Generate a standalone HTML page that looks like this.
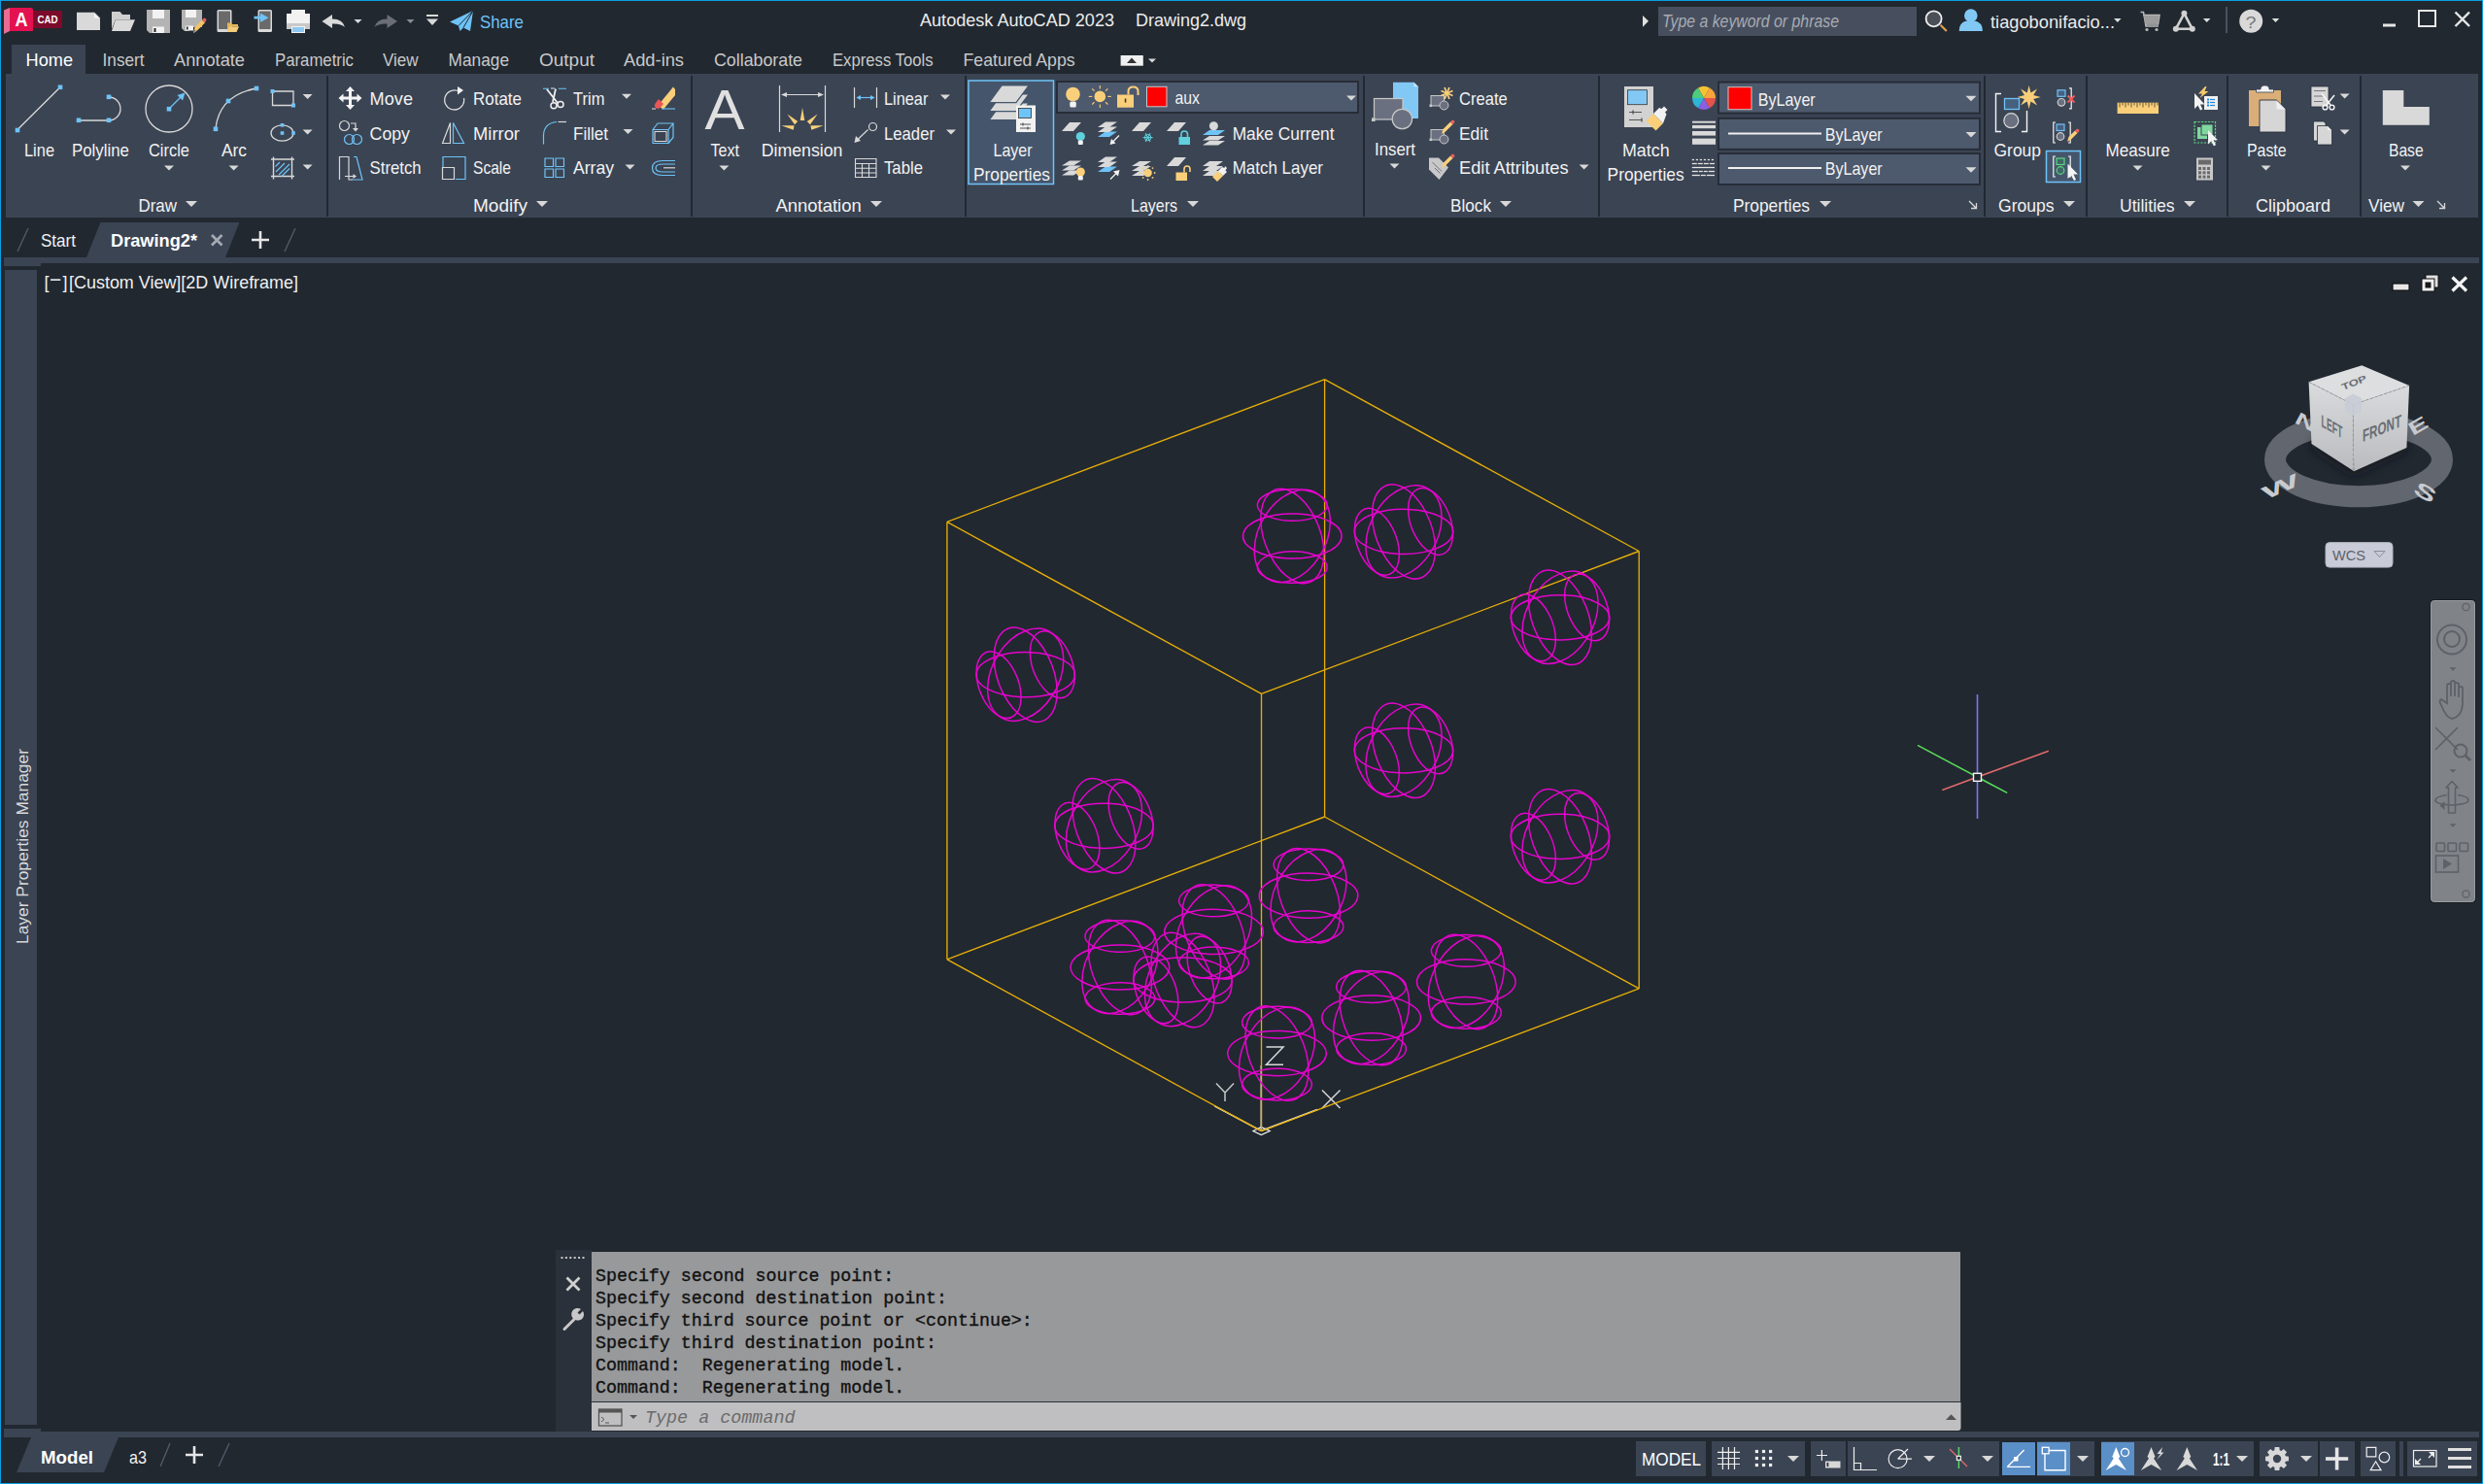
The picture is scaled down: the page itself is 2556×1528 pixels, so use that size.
<!DOCTYPE html>
<html><head><meta charset="utf-8"><title>AutoCAD 2023</title>
<style>html,body{margin:0;padding:0;background:#212830;overflow:hidden}svg{display:block}text{font-family:"Liberation Sans",sans-serif}</style></head>
<body><svg width="2556" height="1528" viewBox="0 0 2556 1528">
<rect x="0" y="0" width="2556" height="1528" fill="#212830" />
<rect x="12" y="46" width="76" height="30" fill="#3b4453" />
<rect x="6" y="76" width="2545" height="148" fill="#3b4453" />
<rect x="336" y="78" width="2" height="145" fill="#222832" />
<rect x="711" y="78" width="2" height="145" fill="#222832" />
<rect x="993" y="78" width="2" height="145" fill="#222832" />
<rect x="1403" y="78" width="2" height="145" fill="#222832" />
<rect x="1645" y="78" width="2" height="145" fill="#222832" />
<rect x="2042" y="78" width="2" height="145" fill="#222832" />
<rect x="2147" y="78" width="2" height="145" fill="#222832" />
<rect x="2292" y="78" width="2" height="145" fill="#222832" />
<rect x="2429" y="78" width="2" height="145" fill="#222832" />
<path d="M89 265L103.5 229H246.5L232 265Z" fill="#3b4453"/>
<rect x="4" y="265" width="2548" height="6" fill="#3b4453" />
<rect x="4" y="265" width="38" height="9" fill="#3b4453" />
<rect x="5" y="278" width="33" height="1189" fill="#3b4453" />
<rect x="4" y="1474" width="2548" height="6" fill="#3b4453" />
<rect x="4" y="1471" width="38" height="9" fill="#3b4453" />
<path d="M17 1516L32 1480H122L107 1516Z" fill="#3b4453"/>
<rect x="0" y="0" width="2556" height="1" fill="#0c9ee0" />
<rect x="0" y="0" width="1" height="1528" fill="#0c9ee0" />
<rect x="2555" y="0" width="1" height="1528" fill="#0c9ee0" />
<rect x="0" y="1527" width="2556" height="1" fill="#0c9ee0" />
<path d="M4 10.5L10 8V32L4 35Z" fill="#ea6c92"/>
<path d="M10 8H32Q34 8 34 10V32H10Z" fill="#e3114f"/>
<text x="15.5" y="27.2" font-size="19.5" fill="#ffffff" textLength="13" lengthAdjust="spacingAndGlyphs" font-weight="bold"  xml:space="preserve">A</text>
<rect x="34" y="11" width="30" height="18" fill="#7c0b2b" />
<text x="38.5" y="24.3" font-size="10.8" fill="#ffffff" textLength="21" lengthAdjust="spacingAndGlyphs" font-weight="bold"  xml:space="preserve">CAD</text>
<path d="M79 12.7H97L103 18.7V31H79Z" fill="#d9d9d9"/><path d="M97 12.7V18.7H103Z" fill="#f4f4f4"/><path d="M97 12.7L103 18.7" stroke="#9a9a9a" stroke-width="0.8"/>
<path d="M115 12H123.5L126 15H134V20H119L115 30Z" fill="#cfcfcf"/><path d="M119 20.3H139L134 32H115Z" fill="#d9d9d9"/>
<path d="M151 10H175V34H154L151 31Z" fill="#b4b4b4"/><rect x="157" y="10" width="12" height="9" fill="#f2f2f2"/><rect x="157" y="27.5" width="12" height="6.5" fill="#f2f2f2"/><rect x="158.5" y="29" width="2" height="4" fill="#222"/>
<path d="M187 10H208V28H199L194 32H190L187 29Z" fill="#b4b4b4"/><rect x="191" y="10" width="11" height="8" fill="#f2f2f2"/><rect x="191" y="26.5" width="8" height="5" fill="#f2f2f2"/><rect x="192" y="27.5" width="1.6" height="3" fill="#222"/>
<path d="M199 34L200.5 28L208 20.5L211 23.5L203.5 31Z" fill="#f2c464"/><path d="M208 20.5L209.5 19Q210.5 18 211.5 19L212 19.5Q213 20.5 212 21.5L211 23.5Z" fill="#e86060"/><path d="M199 34L200.5 30.5L202.5 32.5Z" fill="#888"/>
<rect x="223.5" y="10" width="15" height="23" rx="1.5" fill="#d9d9d9"/><rect x="225" y="11.5" width="12" height="18.5" fill="#6a6a6a"/>
<path d="M234 23.5H238L239 25H245V27H236.5L234 33Z" fill="#e7b55a"/><path d="M236 27.3H246L243.5 33H233.5Z" fill="#f4cd7a"/>
<rect x="265.5" y="10" width="14.5" height="23" rx="1.5" fill="#d9d9d9"/><rect x="267" y="11.5" width="11.5" height="18.5" fill="#6a6a6a"/>
<path d="M261.5 16.8H268V13.5L276.5 18.2L268 23V19.6H261.5Z" fill="#6ec3f7"/>
<rect x="300" y="10" width="14" height="5" fill="#f2f2f2"/><rect x="295" y="14" width="24" height="10" fill="#f2f2f2"/><rect x="295" y="24" width="24" height="6" fill="#c8c8c8"/><rect x="300" y="27" width="14" height="7" fill="#f2f2f2"/><rect x="301" y="28" width="12" height="5" fill="#8ec8f2"/>
<path d="M331.5 22L342 15V19.5Q353 19.5 355 28Q351 24 342 24.5V29Z" fill="#d9d9d9"/>
<path d="M364.5 20.0h8l-4.0 4z" fill="#d9d9d9"/>
<path d="M409 22L398.5 15V19.5Q387.5 19.5 385.5 28Q389.5 24 398.5 24.5V29Z" fill="#6b6e75"/>
<path d="M418.5 20.0h8l-4.0 4z" fill="#8a8c90"/>
<rect x="439" y="15" width="12" height="2" fill="#d9d9d9"/><path d="M439 19.5H451L445 26Z" fill="#d9d9d9"/>
<path d="M463 22.5L487 11L484 32L477 28.5L473.5 32L472 26.5Z" fill="#6ec3f7"/><path d="M472 26.5L487 11L477 28.5" fill="none" stroke="#212830" stroke-width="1"/>
<path d="M1691 16V27.7L1697 21.8Z" fill="#e0e0e0"/>
<circle cx="1990.6" cy="19.3" r="8" fill="#4a4f58" stroke="#f0f0f0" stroke-width="1.8"/><path d="M1997.5 25.8L2003.8 32" stroke="#e0a050" stroke-width="2.2"/>
<circle cx="2028.8" cy="16" r="6.8" fill="#82c8f5"/><path d="M2016.7 32Q2016.7 21 2028.8 21Q2040.9 21 2040.9 32Z" fill="#82c8f5"/>
<path d="M2176.05 19.0h7.5l-3.75 4z" fill="#e0e0e0"/>
<path d="M2203.5 12.5H2206.5L2209 27H2222M2206 15.5H2223L2221.5 25H2208" fill="none" stroke="#b8b8b8" stroke-width="1.5"/><path d="M2207 16H2222.5L2221 24.5H2208.5Z" fill="#9c9c9c"/><circle cx="2210" cy="30.5" r="1.6" fill="#b8b8b8"/><circle cx="2220" cy="30.5" r="1.6" fill="#b8b8b8"/>
<path d="M2248.4 13.8L2239.8 29.8H2256.8Z" fill="none" stroke="#d0d0d0" stroke-width="2.6" stroke-linejoin="round"/><circle cx="2248.4" cy="13.8" r="3" fill="#d0d0d0"/><circle cx="2239.8" cy="29.8" r="3" fill="#d0d0d0"/><circle cx="2256.8" cy="29.8" r="3" fill="#d0d0d0"/>
<path d="M2267.95 19.0h7.5l-3.75 4z" fill="#e0e0e0"/>
<rect x="2291" y="7" width="2" height="27" fill="#4a5160" />
<circle cx="2317.2" cy="21.7" r="12" fill="#d9d9d9"/>
<text x="2311.5" y="28.5" font-size="17" fill="#7a7a7a" textLength="11" lengthAdjust="spacingAndGlyphs"  xml:space="preserve">?</text>
<path d="M2338.75 19.0h7.5l-3.75 4z" fill="#e0e0e0"/>
<rect x="2453" y="24.5" width="13" height="3" fill="#e6e6e6" />
<rect x="2490" y="11" width="17" height="16" fill="none" stroke="#e6e6e6" stroke-width="2"/>
<path d="M2527.5 12.5L2542 27M2542 12.5L2527.5 27" stroke="#e6e6e6" stroke-width="2.4"/>
<text x="947" y="26.6" font-size="18.5" fill="#ececec" textLength="200" lengthAdjust="spacingAndGlyphs"  xml:space="preserve">Autodesk AutoCAD 2023</text>
<text x="1169" y="26.6" font-size="18.5" fill="#ececec" textLength="114" lengthAdjust="spacingAndGlyphs"  xml:space="preserve">Drawing2.dwg</text>
<text x="494" y="29" font-size="18.5" fill="#6ec3f7" textLength="45" lengthAdjust="spacingAndGlyphs"  xml:space="preserve">Share</text>
<rect x="1707" y="7" width="266" height="30" fill="#474f5f" />
<text x="1711" y="27.7" font-size="17.5" fill="#a8abb2" textLength="182" lengthAdjust="spacingAndGlyphs" font-style="italic"  xml:space="preserve">Type a keyword or phrase</text>
<text x="2049" y="29" font-size="18.5" fill="#ececec" textLength="128" lengthAdjust="spacingAndGlyphs"  xml:space="preserve">tiagobonifacio...</text>
<text x="26.6" y="68" font-size="19" fill="#ffffff" textLength="48.4" lengthAdjust="spacingAndGlyphs"  xml:space="preserve">Home</text>
<text x="105.6" y="68" font-size="19" fill="#c9c9c9" textLength="43.0" lengthAdjust="spacingAndGlyphs"  xml:space="preserve">Insert</text>
<text x="179" y="68" font-size="19" fill="#c9c9c9" textLength="73" lengthAdjust="spacingAndGlyphs"  xml:space="preserve">Annotate</text>
<text x="283" y="68" font-size="19" fill="#c9c9c9" textLength="81" lengthAdjust="spacingAndGlyphs"  xml:space="preserve">Parametric</text>
<text x="394" y="68" font-size="19" fill="#c9c9c9" textLength="36.60000000000002" lengthAdjust="spacingAndGlyphs"  xml:space="preserve">View</text>
<text x="461.6" y="68" font-size="19" fill="#c9c9c9" textLength="62.39999999999998" lengthAdjust="spacingAndGlyphs"  xml:space="preserve">Manage</text>
<text x="555" y="68" font-size="19" fill="#c9c9c9" textLength="57" lengthAdjust="spacingAndGlyphs"  xml:space="preserve">Output</text>
<text x="642" y="68" font-size="19" fill="#c9c9c9" textLength="62" lengthAdjust="spacingAndGlyphs"  xml:space="preserve">Add-ins</text>
<text x="735" y="68" font-size="19" fill="#c9c9c9" textLength="91" lengthAdjust="spacingAndGlyphs"  xml:space="preserve">Collaborate</text>
<text x="857" y="68" font-size="19" fill="#c9c9c9" textLength="103.5" lengthAdjust="spacingAndGlyphs"  xml:space="preserve">Express Tools</text>
<text x="991.5" y="68" font-size="19" fill="#c9c9c9" textLength="115.09999999999991" lengthAdjust="spacingAndGlyphs"  xml:space="preserve">Featured Apps</text>
<text x="142.4" y="218" font-size="19" fill="#f2f2f2" textLength="39.599999999999994" lengthAdjust="spacingAndGlyphs"  xml:space="preserve">Draw</text>
<path d="M191.0 207.0h12l-6.0 6z" fill="#d8d8d8"/>
<text x="487" y="218" font-size="19" fill="#f2f2f2" textLength="56" lengthAdjust="spacingAndGlyphs"  xml:space="preserve">Modify</text>
<path d="M552.0 207.0h12l-6.0 6z" fill="#d8d8d8"/>
<text x="798.4" y="218" font-size="19" fill="#f2f2f2" textLength="88.30000000000007" lengthAdjust="spacingAndGlyphs"  xml:space="preserve">Annotation</text>
<path d="M896.0 207.0h12l-6.0 6z" fill="#d8d8d8"/>
<text x="1164" y="218" font-size="19" fill="#f2f2f2" textLength="48" lengthAdjust="spacingAndGlyphs"  xml:space="preserve">Layers</text>
<path d="M1222.0 207.0h12l-6.0 6z" fill="#d8d8d8"/>
<text x="1493" y="218" font-size="19" fill="#f2f2f2" textLength="42" lengthAdjust="spacingAndGlyphs"  xml:space="preserve">Block</text>
<path d="M1544.0 207.0h12l-6.0 6z" fill="#d8d8d8"/>
<text x="1784" y="218" font-size="19" fill="#f2f2f2" textLength="79" lengthAdjust="spacingAndGlyphs"  xml:space="preserve">Properties</text>
<path d="M1873.0 207.0h12l-6.0 6z" fill="#d8d8d8"/>
<text x="2057" y="218" font-size="19" fill="#f2f2f2" textLength="57.5" lengthAdjust="spacingAndGlyphs"  xml:space="preserve">Groups</text>
<path d="M2124.0 207.0h12l-6.0 6z" fill="#d8d8d8"/>
<text x="2182" y="218" font-size="19" fill="#f2f2f2" textLength="56.59999999999991" lengthAdjust="spacingAndGlyphs"  xml:space="preserve">Utilities</text>
<path d="M2248.0 207.0h12l-6.0 6z" fill="#d8d8d8"/>
<text x="2322" y="218" font-size="19" fill="#f2f2f2" textLength="77" lengthAdjust="spacingAndGlyphs"  xml:space="preserve">Clipboard</text>
<text x="2438" y="218" font-size="19" fill="#f2f2f2" textLength="37" lengthAdjust="spacingAndGlyphs"  xml:space="preserve">View</text>
<path d="M2483.5 207.0h12l-6.0 6z" fill="#d8d8d8"/>
<rect x="997" y="83" width="87.5" height="106.5" fill="#45566c" stroke="#6ec3f7" stroke-width="1.5"/>
<text x="25" y="161" font-size="19" fill="#f2f2f2" textLength="31" lengthAdjust="spacingAndGlyphs"  xml:space="preserve">Line</text>
<text x="74" y="161" font-size="19" fill="#f2f2f2" textLength="59" lengthAdjust="spacingAndGlyphs"  xml:space="preserve">Polyline</text>
<text x="153" y="161" font-size="19" fill="#f2f2f2" textLength="42" lengthAdjust="spacingAndGlyphs"  xml:space="preserve">Circle</text>
<text x="228" y="161" font-size="19" fill="#f2f2f2" textLength="26" lengthAdjust="spacingAndGlyphs"  xml:space="preserve">Arc</text>
<text x="731.6" y="161" font-size="19" fill="#f2f2f2" textLength="29.399999999999977" lengthAdjust="spacingAndGlyphs"  xml:space="preserve">Text</text>
<text x="783.7" y="161" font-size="19" fill="#f2f2f2" textLength="83.79999999999995" lengthAdjust="spacingAndGlyphs"  xml:space="preserve">Dimension</text>
<text x="1022.5" y="161" font-size="19" fill="#f2f2f2" textLength="40.09999999999991" lengthAdjust="spacingAndGlyphs"  xml:space="preserve">Layer</text>
<text x="1415" y="159.5" font-size="19" fill="#f2f2f2" textLength="42" lengthAdjust="spacingAndGlyphs"  xml:space="preserve">Insert</text>
<text x="1670" y="161" font-size="19" fill="#f2f2f2" textLength="48.59999999999991" lengthAdjust="spacingAndGlyphs"  xml:space="preserve">Match</text>
<text x="2052.5" y="161" font-size="19" fill="#f2f2f2" textLength="48.5" lengthAdjust="spacingAndGlyphs"  xml:space="preserve">Group</text>
<text x="2167.5" y="161" font-size="19" fill="#f2f2f2" textLength="66.30000000000018" lengthAdjust="spacingAndGlyphs"  xml:space="preserve">Measure</text>
<text x="2313" y="161" font-size="19" fill="#f2f2f2" textLength="40.59999999999991" lengthAdjust="spacingAndGlyphs"  xml:space="preserve">Paste</text>
<text x="2459" y="161" font-size="19" fill="#f2f2f2" textLength="35.59999999999991" lengthAdjust="spacingAndGlyphs"  xml:space="preserve">Base</text>
<text x="1002" y="186" font-size="19" fill="#f2f2f2" textLength="79" lengthAdjust="spacingAndGlyphs"  xml:space="preserve">Properties</text>
<text x="1654.6" y="186" font-size="19" fill="#f2f2f2" textLength="79" lengthAdjust="spacingAndGlyphs"  xml:space="preserve">Properties</text>
<path d="M169.0 170.5h10l-5.0 5z" fill="#d8d8d8"/>
<path d="M235.6 170.5h10l-5.0 5z" fill="#d8d8d8"/>
<path d="M740.4 170.5h10l-5.0 5z" fill="#d8d8d8"/>
<path d="M2195.5 170.5h10l-5.0 5z" fill="#d8d8d8"/>
<path d="M2327.5 170.5h10l-5.0 5z" fill="#d8d8d8"/>
<path d="M2471.0 170.5h10l-5.0 5z" fill="#d8d8d8"/>
<path d="M1430.5 168.5h10l-5.0 5z" fill="#d8d8d8"/>
<text x="380.6" y="108" font-size="19" fill="#f2f2f2" textLength="44.39999999999998" lengthAdjust="spacingAndGlyphs"  xml:space="preserve">Move</text>
<text x="380.6" y="144" font-size="19" fill="#f2f2f2" textLength="41.39999999999998" lengthAdjust="spacingAndGlyphs"  xml:space="preserve">Copy</text>
<text x="380.6" y="179" font-size="19" fill="#f2f2f2" textLength="53.099999999999966" lengthAdjust="spacingAndGlyphs"  xml:space="preserve">Stretch</text>
<text x="487" y="108" font-size="19" fill="#f2f2f2" textLength="50" lengthAdjust="spacingAndGlyphs"  xml:space="preserve">Rotate</text>
<text x="487" y="144" font-size="19" fill="#f2f2f2" textLength="48" lengthAdjust="spacingAndGlyphs"  xml:space="preserve">Mirror</text>
<text x="487" y="179" font-size="19" fill="#f2f2f2" textLength="39" lengthAdjust="spacingAndGlyphs"  xml:space="preserve">Scale</text>
<text x="590" y="108" font-size="19" fill="#f2f2f2" textLength="32.39999999999998" lengthAdjust="spacingAndGlyphs"  xml:space="preserve">Trim</text>
<text x="590" y="144" font-size="19" fill="#f2f2f2" textLength="36" lengthAdjust="spacingAndGlyphs"  xml:space="preserve">Fillet</text>
<text x="590" y="179" font-size="19" fill="#f2f2f2" textLength="42" lengthAdjust="spacingAndGlyphs"  xml:space="preserve">Array</text>
<text x="910" y="108" font-size="19" fill="#f2f2f2" textLength="45.39999999999998" lengthAdjust="spacingAndGlyphs"  xml:space="preserve">Linear</text>
<text x="910" y="144" font-size="19" fill="#f2f2f2" textLength="52" lengthAdjust="spacingAndGlyphs"  xml:space="preserve">Leader</text>
<text x="910" y="179" font-size="19" fill="#f2f2f2" textLength="40" lengthAdjust="spacingAndGlyphs"  xml:space="preserve">Table</text>
<text x="1268.7" y="144" font-size="19" fill="#f2f2f2" textLength="104.79999999999995" lengthAdjust="spacingAndGlyphs"  xml:space="preserve">Make Current</text>
<text x="1268.7" y="179" font-size="19" fill="#f2f2f2" textLength="93.29999999999995" lengthAdjust="spacingAndGlyphs"  xml:space="preserve">Match Layer</text>
<text x="1502" y="108" font-size="19" fill="#f2f2f2" textLength="49.700000000000045" lengthAdjust="spacingAndGlyphs"  xml:space="preserve">Create</text>
<text x="1502" y="144" font-size="19" fill="#f2f2f2" textLength="30" lengthAdjust="spacingAndGlyphs"  xml:space="preserve">Edit</text>
<text x="1502" y="179" font-size="19" fill="#f2f2f2" textLength="112.59999999999991" lengthAdjust="spacingAndGlyphs"  xml:space="preserve">Edit Attributes</text>
<path d="M640.0 96.8h10l-5.0 5z" fill="#d8d8d8"/>
<path d="M641.5 133.0h10l-5.0 5z" fill="#d8d8d8"/>
<path d="M643.5 169.5h10l-5.0 5z" fill="#d8d8d8"/>
<path d="M968.0 97.5h10l-5.0 5z" fill="#d8d8d8"/>
<path d="M974.0 133.5h10l-5.0 5z" fill="#d8d8d8"/>
<path d="M1625.6 169.5h10l-5.0 5z" fill="#d8d8d8"/>
<path d="M311.6 97.1h10l-5.0 5z" fill="#d8d8d8"/>
<path d="M311.6 133.5h10l-5.0 5z" fill="#d8d8d8"/>
<path d="M311.6 169.5h10l-5.0 5z" fill="#d8d8d8"/>
<path d="M2408.6 96.5h10l-5.0 5z" fill="#d8d8d8"/>
<path d="M2408.6 133.5h10l-5.0 5z" fill="#d8d8d8"/>
<rect x="1088" y="84" width="310" height="32" fill="#4d596c" stroke="#272d38" stroke-width="2"/>
<text x="1209.5" y="107" font-size="19" fill="#f2f2f2" textLength="25.5" lengthAdjust="spacingAndGlyphs"  xml:space="preserve">aux</text>
<path d="M1386.0 98.5h10l-5.0 5z" fill="#d8d8d8"/>
<rect x="1769" y="84.6" width="269" height="32" fill="#4d596c" stroke="#272d38" stroke-width="2"/>
<path d="M2023.5 98.85h11l-5.5 5.5z" fill="#d8d8d8"/>
<rect x="1769" y="121.8" width="269" height="32" fill="#4d596c" stroke="#272d38" stroke-width="2"/>
<path d="M2023.5 136.05h11l-5.5 5.5z" fill="#d8d8d8"/>
<rect x="1769" y="158" width="269" height="32" fill="#4d596c" stroke="#272d38" stroke-width="2"/>
<path d="M2023.5 172.25h11l-5.5 5.5z" fill="#d8d8d8"/>
<rect x="1779" y="89.7" width="24" height="23" fill="#ff0000" stroke="#c8c8c8" stroke-width="1"/>
<text x="1809.7" y="109" font-size="19" fill="#f2f2f2" textLength="59" lengthAdjust="spacingAndGlyphs"  xml:space="preserve">ByLayer</text>
<text x="1878.7" y="145" font-size="19" fill="#f2f2f2" textLength="59" lengthAdjust="spacingAndGlyphs"  xml:space="preserve">ByLayer</text>
<text x="1878.7" y="180" font-size="19" fill="#f2f2f2" textLength="59" lengthAdjust="spacingAndGlyphs"  xml:space="preserve">ByLayer</text>
<rect x="1779" y="136.5" width="96" height="2" fill="#f0f0f0" />
<rect x="1779" y="172" width="96" height="2" fill="#f0f0f0" />
<path d="M18 133.5L62 89.8" fill="none" stroke="#d9d9d9" stroke-width="1.3" />
<rect x="15.7" y="131.7" width="4.6" height="4.6" fill="#6ec3f7" />
<rect x="59.7" y="87.5" width="4.6" height="4.6" fill="#6ec3f7" />
<path d="M81 124H112M112 100A12 12 0 0 1 112 124" fill="none" stroke="#d9d9d9" stroke-width="1.3" />
<rect x="78.7" y="121.5" width="4.6" height="4.6" fill="#6ec3f7" />
<rect x="109.7" y="121.5" width="4.6" height="4.6" fill="#6ec3f7" />
<rect x="109.7" y="97.5" width="4.6" height="4.6" fill="#6ec3f7" />
<circle cx="174" cy="112" r="24" fill="none" stroke="#d9d9d9" stroke-width="1.3"/>
<path d="M175 111L186 100" fill="none" stroke="#6ec3f7" stroke-width="1.3" />
<path d="M190.5 95.5L182.5 98L188 103.5Z" fill="#6ec3f7"/>
<rect x="171.7" y="109.9" width="4.6" height="4.6" fill="#6ec3f7" />
<path d="M222 132Q226 98 264 91" fill="none" stroke="#d9d9d9" stroke-width="1.3" />
<rect x="219.7" y="130.5" width="4.6" height="4.6" fill="#6ec3f7" />
<rect x="232.7" y="101.7" width="4.6" height="4.6" fill="#6ec3f7" />
<rect x="261.7" y="88.7" width="4.6" height="4.6" fill="#6ec3f7" />
<path d="M280.5 94H302V108.5H280.5Z" fill="none" stroke="#d9d9d9" stroke-width="1.3" />
<rect x="278.5" y="92.0" width="4" height="4" fill="#6ec3f7" />
<rect x="300.0" y="106.5" width="4" height="4" fill="#6ec3f7" />
<ellipse cx="290.5" cy="137" rx="11.5" ry="8.2" fill="none" stroke="#d9d9d9" stroke-width="1.3"/>
<rect x="288.7" y="135.2" width="3.6" height="3.6" fill="#6ec3f7" />
<rect x="288.7" y="127.0" width="3.6" height="3.6" fill="#6ec3f7" />
<rect x="300.2" y="135.2" width="3.6" height="3.6" fill="#6ec3f7" />
<path d="M279 164H303M279 181.5H303M281.5 161.5V184.5M300.5 161.5V184.5" fill="none" stroke="#d9d9d9" stroke-width="1.4" />
<path d="M284 177L293 168M287 180L298 169M290 181.5L298 173.5M283.5 171.5L288 167" fill="none" stroke="#6ec3f7" stroke-width="1.2" />
<path d="M360.5 89L365 94H362V99.5H367.5V96.5L372.5 101L367.5 105.5V102.5H362V108H365L360.5 113L356 108H359V102.5H353.5V105.5L348.5 101L353.5 96.5V99.5H359V94H356Z" fill="#f4f4f4"/>
<path d="M473 94.5A10 10 0 1 0 477.5 101" fill="none" stroke="#d9d9d9" stroke-width="1.3"/>
<path d="M471 89V97.5L477 93Z" fill="#f4f4f4"/>
<path d="M559 91.2H565M575 91.2H583" fill="none" stroke="#6ec3f7" stroke-width="1.1" />
<path d="M567 91H571" fill="none" stroke="#d9d9d9" stroke-width="1.1" />
<path d="M563 92L574 106M572 91.5L569 105" fill="none" stroke="#f0f0f0" stroke-width="1.8" />
<circle cx="570" cy="108.8" r="3" fill="none" stroke="#f0f0f0" stroke-width="1.5"/><circle cx="577" cy="107.5" r="3" fill="none" stroke="#f0f0f0" stroke-width="1.5"/>
<path d="M677 109L693 89.5L695 92V98L683 112.5Z" fill="#f9cf7a"/>
<path d="M674.5 106.5Q673 109 675 111Q677.5 113 680 110.5L683 107L678 102Z" fill="#e85656"/>
<path d="M671 112H675" fill="none" stroke="#d9d9d9" stroke-width="1.1" />
<path d="M681 112H695" fill="none" stroke="#6ec3f7" stroke-width="1.1" />
<circle cx="354.5" cy="129.5" r="5" fill="none" stroke="#d9d9d9" stroke-width="1.2"/>
<path d="M361 127H366V133" fill="none" stroke="#d9d9d9" stroke-width="1.2" />
<path d="M363 132H369L366 135.5Z" fill="#d9d9d9"/>
<circle cx="359.5" cy="143.5" r="5" fill="none" stroke="#6ec3f7" stroke-width="1.2"/><circle cx="367.5" cy="143.5" r="5" fill="none" stroke="#6ec3f7" stroke-width="1.2"/>
<path d="M455.5 147.5L463.5 126.5V147.5Z" fill="none" stroke="#d9d9d9" stroke-width="1.2" />
<path d="M466.5 147.5V126.5L477.5 147.5Z" fill="none" stroke="#6ec3f7" stroke-width="1.2" />
<path d="M559.5 148.5V139Q560 127 573 125.5" fill="none" stroke="#6ec3f7" stroke-width="1.2" />
<path d="M574.5 125.5H583" fill="none" stroke="#d9d9d9" stroke-width="1.2" />
<path d="M672 133.5H688V147.5H672ZM672 133.5L677 127H693L688 133.5M693 127V141.5L688 147.5" fill="none" stroke="#6ec3f7" stroke-width="1.2" />
<path d="M674 135.5H686V145.5H674Z" fill="none" stroke="#d9d9d9" stroke-width="1.1" />
<path d="M349.5 185V161.5H359V185H363" fill="none" stroke="#d9d9d9" stroke-width="1.2" />
<path d="M364 161.5H367L373 185H363" fill="none" stroke="#6ec3f7" stroke-width="1.2" />
<path d="M355 181.5H364" fill="none" stroke="#d9d9d9" stroke-width="1.1" />
<path d="M363.5 179L367 181.5L363.5 184Z" fill="#d9d9d9"/>
<path d="M456 172V161.5H479V184.5H469" fill="none" stroke="#6ec3f7" stroke-width="1.2" />
<path d="M455.5 172.5H467.5V184.5H455.5Z" fill="none" stroke="#d9d9d9" stroke-width="1.2" />
<path d="M561 163H569.5V171.5H561Z" fill="none" stroke="#6ec3f7" stroke-width="1.2" />
<path d="M561 174H569.5V182.5H561Z" fill="none" stroke="#6ec3f7" stroke-width="1.2" />
<path d="M572 163H580.5V171.5H572Z" fill="none" stroke="#6ec3f7" stroke-width="1.2" />
<path d="M572 174H580.5V182.5H572Z" fill="none" stroke="#6ec3f7" stroke-width="1.2" />
<path d="M695 165.5H682Q671.5 165.5 671.5 173Q671.5 180.5 682 180.5H695" fill="none" stroke="#6ec3f7" stroke-width="1.2" />
<path d="M695 169H682.5Q675 169 675 173Q675 177 682.5 177H695" fill="none" stroke="#6ec3f7" stroke-width="1.2" />
<path d="M695 172.8H683" fill="none" stroke="#d9d9d9" stroke-width="1.2" />
<text x="725.5" y="132.5" font-size="57" fill="#e0e0e0" textLength="41" lengthAdjust="spacingAndGlyphs"  xml:space="preserve">A</text>
<path d="M802.5 88V136M849.5 88V136M806 97.5H846" fill="none" stroke="#d9d9d9" stroke-width="1.2" />
<path d="M804 97.5L810 95V100Z" fill="#d9d9d9"/>
<path d="M848 97.5L842 95V100Z" fill="#d9d9d9"/>
<path d="M828.30 124.00L823.70 124.00L826.00 111.00Z" fill="#f9cf7a"/>
<path d="M821.26 125.01L818.01 128.26L810.44 117.44Z" fill="#f9cf7a"/>
<path d="M833.99 128.26L830.74 125.01L841.56 117.44Z" fill="#f9cf7a"/>
<path d="M817.54 129.17L816.74 133.70L804.33 129.18Z" fill="#f9cf7a"/>
<path d="M835.26 133.70L834.46 129.17L847.67 129.18Z" fill="#f9cf7a"/>
<path d="M879.5 90V111M902.5 90V111" fill="none" stroke="#d9d9d9" stroke-width="1.2" />
<path d="M882 100.5H900" fill="none" stroke="#6ec3f7" stroke-width="1.2" />
<path d="M881.5 100.5L886 98V103Z" fill="#6ec3f7"/>
<path d="M900.5 100.5L896 98V103Z" fill="#6ec3f7"/>
<path d="M881.5 145L893.5 133.5" fill="none" stroke="#d9d9d9" stroke-width="1.2" />
<path d="M879.5 147L881 140L886 145Z" fill="#d9d9d9"/>
<circle cx="898.5" cy="130.5" r="4" fill="none" stroke="#d9d9d9" stroke-width="1.2"/>
<path d="M880.5 163.5H902V182.5H880.5ZM880.5 168.5H902M880.5 173.3H902M880.5 178H902M887.5 168.5V182.5M894.5 168.5V182.5" fill="none" stroke="#d9d9d9" stroke-width="1.1" />
<path d="M1018.2 123.6L1031.2 106H1059L1046 123.6Z" fill="#d9d9d9" stroke="#45566c" stroke-width="1.2"/>
<path d="M1018.2 114.6L1031.2 97H1059L1046 114.6Z" fill="#d9d9d9" stroke="#45566c" stroke-width="1.2"/>
<path d="M1018.2 105.6L1031.2 88H1059L1046 105.6Z" fill="#d9d9d9" stroke="#45566c" stroke-width="1.2"/>
<rect x="1046" y="108.5" width="20" height="27.5" fill="#f2f2f2" />
<rect x="1048.6" y="111.5" width="13" height="10" fill="#6ec3f7" stroke="#333" stroke-width="0.8"/>
<path d="M1050 128H1061M1050 132H1061" fill="none" stroke="#555" stroke-width="1" />
<path d="M1053 126.5V129.5M1058 130.5V133.5" fill="none" stroke="#555" stroke-width="1.2" />
<circle cx="1104.5" cy="97" r="7.3" fill="#f9cf7a"/>
<rect x="1101.3" y="104.5" width="6.5" height="6" fill="#f2f2f2" rx="1.5"/>
<circle cx="1132.3" cy="99.4" r="5.8" fill="#f9cf7a"/>
<path d="M1140.3 99.4L1143.8 99.4" fill="none" stroke="#f9cf7a" stroke-width="1.1" />
<path d="M1138.0 105.1L1140.4 107.5" fill="none" stroke="#f9cf7a" stroke-width="1.1" />
<path d="M1132.3 107.4L1132.3 110.9" fill="none" stroke="#f9cf7a" stroke-width="1.1" />
<path d="M1126.6 105.1L1124.2 107.5" fill="none" stroke="#f9cf7a" stroke-width="1.1" />
<path d="M1124.3 99.4L1120.8 99.4" fill="none" stroke="#f9cf7a" stroke-width="1.1" />
<path d="M1126.6 93.7L1124.2 91.3" fill="none" stroke="#f9cf7a" stroke-width="1.1" />
<path d="M1132.3 91.4L1132.3 87.9" fill="none" stroke="#f9cf7a" stroke-width="1.1" />
<path d="M1138.0 93.7L1140.4 91.3" fill="none" stroke="#f9cf7a" stroke-width="1.1" />
<rect x="1150" y="97.5" width="17" height="13.2" fill="#f9cf7a" />
<path d="M1161.5 97.5V94Q1161.5 89.5 1166.5 89.5Q1171.5 89.5 1171.5 94V98" fill="none" stroke="#f9cf7a" stroke-width="2" />
<rect x="1157.8" y="101.5" width="1.5" height="4" fill="#333" />
<rect x="1180.5" y="89.3" width="20.5" height="20.5" fill="#ff0000" stroke="#c8c8c8" stroke-width="1"/>
<path d="M1093 135L1101 126H1113L1105 135Z" fill="#d9d9d9"/>
<circle cx="1112.3" cy="140.6" r="4.6" fill="#5fd0dc"/>
<rect x="1109.8" y="144.5" width="5" height="4.5" fill="#f2f2f2" rx="1"/>
<path d="M1130 141.0L1138 135.5H1150L1142 141.0Z" fill="#6ec3f7"/>
<path d="M1130 136.0L1138 130.5H1150L1142 136.0Z" fill="#d9d9d9"/>
<path d="M1130 131.0L1138 125.5H1150L1142 131.0Z" fill="#d9d9d9"/>
<path d="M1152 139.5L1145 146.5" fill="none" stroke="#f4f4f4" stroke-width="1.2" />
<path d="M1142.5 149L1144 143L1148.5 147.5Z" fill="#f4f4f4"/>
<path d="M1165 135L1173 126H1185L1177 135Z" fill="#d9d9d9"/>
<path d="M1186.6 141.6L1176.6 141.6" fill="none" stroke="#5fd0dc" stroke-width="1.1" />
<path d="M1184.1 145.9L1179.1 137.3" fill="none" stroke="#5fd0dc" stroke-width="1.1" />
<path d="M1179.1 145.9L1184.1 137.3" fill="none" stroke="#5fd0dc" stroke-width="1.1" />
<circle cx="1181.6" cy="141.6" r="3.2" fill="none" stroke="#5fd0dc" stroke-width="1"/>
<path d="M1201 135L1209 126H1221L1213 135Z" fill="#d9d9d9"/>
<rect x="1213.5" y="141" width="11.5" height="8" fill="#5fd0dc" />
<path d="M1216 141V138.5Q1216 135 1219.2 135Q1222.5 135 1222.5 138.5V141" fill="none" stroke="#5fd0dc" stroke-width="1.6" />
<path d="M1238 149.5L1245 145H1261L1254 149.5Z" fill="#d9d9d9"/>
<path d="M1238 144.5L1245 140H1261L1254 144.5Z" fill="#d9d9d9"/>
<path d="M1238 139L1245 134H1261L1254 139Z" fill="#6ec3f7"/>
<circle cx="1249.4" cy="129.8" r="4.5" fill="#d9d9d9"/>
<path d="M1093 180.5L1101 175.5H1113L1105 180.5Z" fill="#d9d9d9"/>
<path d="M1093 175.5L1101 170.5H1113L1105 175.5Z" fill="#d9d9d9"/>
<path d="M1093 170.5L1101 165.5H1113L1105 170.5Z" fill="#d9d9d9"/>
<circle cx="1112.3" cy="177" r="4.6" fill="#f9cf7a"/>
<rect x="1109.8" y="181" width="5" height="4.5" fill="#f2f2f2" rx="1"/>
<path d="M1130 177.0L1138 171.5H1150L1142 177.0Z" fill="#6ec3f7"/>
<path d="M1130 172.0L1138 166.5H1150L1142 172.0Z" fill="#d9d9d9"/>
<path d="M1130 167.0L1138 161.5H1150L1142 167.0Z" fill="#d9d9d9"/>
<path d="M1143 184.5L1150 177.5" fill="none" stroke="#f4f4f4" stroke-width="1.2" />
<path d="M1152.5 175L1146 176.5L1151 181.5Z" fill="#f4f4f4"/>
<path d="M1165 181L1173 176H1185L1177 181Z" fill="#d9d9d9"/>
<path d="M1165 176L1173 171H1185L1177 176Z" fill="#d9d9d9"/>
<path d="M1165 171L1173 166H1185L1177 171Z" fill="#d9d9d9"/>
<circle cx="1181.6" cy="178" r="4.2" fill="#f9cf7a"/>
<circle cx="1188.6" cy="178.0" r="0.9" fill="#f9cf7a"/>
<circle cx="1186.5" cy="182.9" r="0.9" fill="#f9cf7a"/>
<circle cx="1181.6" cy="185.0" r="0.9" fill="#f9cf7a"/>
<circle cx="1176.7" cy="182.9" r="0.9" fill="#f9cf7a"/>
<circle cx="1174.6" cy="178.0" r="0.9" fill="#f9cf7a"/>
<circle cx="1176.7" cy="173.1" r="0.9" fill="#f9cf7a"/>
<circle cx="1181.6" cy="171.0" r="0.9" fill="#f9cf7a"/>
<circle cx="1186.5" cy="173.1" r="0.9" fill="#f9cf7a"/>
<path d="M1201 171L1209 162H1221L1213 171Z" fill="#d9d9d9"/>
<rect x="1210.5" y="177.5" width="11.5" height="8.5" fill="#f9cf7a" />
<path d="M1219 177.5V174Q1219 171 1222 171Q1225 171 1225 174V177" fill="none" stroke="#f9cf7a" stroke-width="1.6" />
<path d="M1238 181L1245 176H1259L1252 181Z" fill="#d9d9d9"/>
<path d="M1238 176L1245 171H1259L1252 176Z" fill="#d9d9d9"/>
<path d="M1238 171L1245 166H1259L1252 171Z" fill="#d9d9d9"/>
<path d="M1248 182L1254 176L1259 181L1253 187Z" fill="#f9cf7a"/>
<path d="M1254 176L1258 172L1260.5 173L1261 171L1263 173L1261.5 175.5L1263 177L1259 181Z" fill="#f2f2f2"/>
<path d="M1434 84.8H1455.5L1460 89.3V122H1434Z" fill="#82c8f5"/>
<path d="M1455.5 84.8V89.3H1460Z" fill="#c8e6fa"/>
<rect x="1414.5" y="101.5" width="29.5" height="21.5" fill="#6b7080" stroke="#c8c8c8" stroke-width="1.2"/>
<circle cx="1443.4" cy="122.5" r="10.2" fill="#6b7080" stroke="#c8c8c8" stroke-width="1.2"/>
<rect x="1412" y="121.4" width="3.6" height="3.6" fill="#c8c8c8" />
<rect x="1473" y="98.5" width="13.5" height="10.5" fill="#6b7080" stroke="#c8c8c8" stroke-width="1"/>
<circle cx="1486.5" cy="108.5" r="4.5" fill="#6b7080" stroke="#c8c8c8" stroke-width="1"/>
<rect x="1471.5" y="107.5" width="2.6" height="2.6" fill="#c8c8c8" />
<path d="M1489.5 96L1495.5 98.5" fill="none" stroke="#f9cf7a" stroke-width="1.8" />
<path d="M1489.5 96L1492.0 102.0" fill="none" stroke="#f9cf7a" stroke-width="1.8" />
<path d="M1489.5 96L1487.0 102.0" fill="none" stroke="#f9cf7a" stroke-width="1.8" />
<path d="M1489.5 96L1483.5 98.5" fill="none" stroke="#f9cf7a" stroke-width="1.8" />
<path d="M1489.5 96L1483.5 93.5" fill="none" stroke="#f9cf7a" stroke-width="1.8" />
<path d="M1489.5 96L1487.0 90.0" fill="none" stroke="#f9cf7a" stroke-width="1.8" />
<path d="M1489.5 96L1492.0 90.0" fill="none" stroke="#f9cf7a" stroke-width="1.8" />
<path d="M1489.5 96L1495.5 93.5" fill="none" stroke="#f9cf7a" stroke-width="1.8" />
<rect x="1473" y="133.5" width="13.5" height="10.5" fill="#6b7080" stroke="#c8c8c8" stroke-width="1"/>
<circle cx="1486.5" cy="143.5" r="4.5" fill="#6b7080" stroke="#c8c8c8" stroke-width="1"/>
<rect x="1471.5" y="142.5" width="2.6" height="2.6" fill="#c8c8c8" />
<path d="M1484 138L1485.5 133L1493 125.5L1495.5 128L1488 135.5Z" fill="#f9cf7a"/>
<path d="M1493 125.5L1494.5 124Q1495.5 123 1496.5 124L1497 124.5Q1498 125.5 1497 126.5L1495.5 128Z" fill="#e86060"/>
<path d="M1471 162.5H1481L1491 172.5L1481.5 185L1471 174.5Z" fill="#c8c8c8"/>
<path d="M1474.5 167L1484 176.5M1477 173L1482.5 178.5" fill="none" stroke="#6b7080" stroke-width="1" />
<path d="M1484 173L1485.5 168L1493 160.5L1495.5 163L1488 170.5Z" fill="#f9cf7a"/>
<path d="M1493 160.5L1494.5 159Q1495.5 158 1496.5 159L1497 159.5Q1498 160.5 1497 161.5L1495.5 163Z" fill="#e86060"/>
<rect x="1672" y="89" width="30" height="42" fill="#d2d2d2" />
<rect x="1675.5" y="92.7" width="20" height="15" fill="#82c8f5" stroke="#333" stroke-width="0.8"/>
<path d="M1677 115.5H1690M1677 123.5H1690" fill="none" stroke="#555" stroke-width="1" />
<path d="M1681 113.5V117.5M1690 121.5V125.5" fill="none" stroke="#555" stroke-width="1.4" />
<path d="M1694.5 124.5L1702 117L1712 127L1704.5 134.5Z" fill="#f9cf7a"/>
<path d="M1702 117L1708 111L1710.5 112L1713 109.5L1716.5 113L1714 115.5L1715.5 117.5L1712 127Z" fill="#f2f2f2"/>
<path d="M1754 100.9L1748.00 90.51A12 12 0 0 1 1760.00 90.51Z" fill="#f5c233"/>
<path d="M1754 100.9L1760.00 90.51A12 12 0 0 1 1766.00 100.90Z" fill="#f7a53a"/>
<path d="M1754 100.9L1766.00 100.90A12 12 0 0 1 1760.00 111.29Z" fill="#e5534b"/>
<path d="M1754 100.9L1760.00 111.29A12 12 0 0 1 1748.00 111.29Z" fill="#8a5fe0"/>
<path d="M1754 100.9L1748.00 111.29A12 12 0 0 1 1742.00 100.90Z" fill="#2db5d6"/>
<path d="M1754 100.9L1742.00 100.90A12 12 0 0 1 1748.00 90.51Z" fill="#4ecb7c"/>
<rect x="1742" y="124.7" width="24" height="2" fill="#d9d9d9" />
<rect x="1742" y="128.9" width="24" height="3.3" fill="#d9d9d9" />
<rect x="1742" y="135" width="24" height="4.6" fill="#d9d9d9" />
<rect x="1742" y="142.6" width="24" height="6.2" fill="#d9d9d9" />
<rect x="1741.8" y="163.85" width="2.2" height="1.3" fill="#e4e4e4" />
<rect x="1745.8" y="163.85" width="2.2" height="1.3" fill="#e4e4e4" />
<rect x="1749.8" y="163.85" width="2.2" height="1.3" fill="#e4e4e4" />
<rect x="1753.8" y="163.85" width="2.2" height="1.3" fill="#e4e4e4" />
<rect x="1757.8" y="163.85" width="2.2" height="1.3" fill="#e4e4e4" />
<rect x="1761.8" y="163.85" width="2.2" height="1.3" fill="#e4e4e4" />
<rect x="1741.8" y="167.85" width="5" height="1.3" fill="#e4e4e4" />
<rect x="1747.8" y="167.85" width="5" height="1.3" fill="#e4e4e4" />
<rect x="1753.8" y="167.85" width="5" height="1.3" fill="#e4e4e4" />
<rect x="1759.8" y="167.85" width="5.2" height="1.3" fill="#e4e4e4" />
<rect x="1741.8" y="171.85" width="23.2" height="1.3" fill="#e4e4e4" />
<rect x="1741.8" y="175.85" width="6" height="1.3" fill="#e4e4e4" />
<rect x="1748.8" y="175.85" width="4" height="1.3" fill="#e4e4e4" />
<rect x="1753.8" y="175.85" width="4" height="1.3" fill="#e4e4e4" />
<rect x="1758.8" y="175.85" width="6.2" height="1.3" fill="#e4e4e4" />
<rect x="1741.8" y="179.85" width="8" height="1.3" fill="#e4e4e4" />
<rect x="1750.8" y="179.85" width="5" height="1.3" fill="#e4e4e4" />
<rect x="1756.8" y="179.85" width="8.2" height="1.3" fill="#e4e4e4" />
<path d="M2060 96.5H2054.5V135.5H2060M2086.5 114V135.5H2081" fill="none" stroke="#f4f4f4" stroke-width="1.4" />
<rect x="2063.5" y="101.5" width="15" height="11" fill="#46607f" stroke="#6ec3f7" stroke-width="1.3"/>
<circle cx="2070.3" cy="124.2" r="7.5" fill="#6b7080" stroke="#d8d8d8" stroke-width="1.2"/>
<path d="M2088.6 88.0L2090.5 95.4L2097.1 91.5L2093.2 98.1L2100.6 100.0L2093.2 101.9L2097.1 108.5L2090.5 104.6L2088.6 112.0L2086.7 104.6L2080.1 108.5L2084.0 101.9L2076.6 100.0L2084.0 98.1L2080.1 91.5L2086.7 95.4Z" fill="#f9cf7a"/>
<path d="M2130 90.8H2132.2V111.8H2130" fill="none" stroke="#f4f4f4" stroke-width="1.2" />
<rect x="2118" y="92.8" width="8" height="6.5" fill="#46607f" stroke="#6ec3f7" stroke-width="1.2"/>
<circle cx="2122" cy="105.3" r="3.8" fill="#6b7080" stroke="#d0d0d0" stroke-width="1.2"/>
<path d="M2128.5 98.5L2135.5 105.5M2135.5 98.5L2128.5 105.5" fill="none" stroke="#f05a5a" stroke-width="2" />
<path d="M2116 126H2113.8V147H2116" fill="none" stroke="#f4f4f4" stroke-width="1.2" />
<path d="M2129 126H2131.2V147H2129" fill="none" stroke="#f4f4f4" stroke-width="1.2" />
<rect x="2117" y="128" width="8" height="6.5" fill="#46607f" stroke="#6ec3f7" stroke-width="1.2"/>
<circle cx="2121" cy="140.5" r="3.8" fill="#6b7080" stroke="#d0d0d0" stroke-width="1.2"/>
<path d="M2128 146L2129.5 141L2136 134.5L2138.5 137L2132 143.5Z" fill="#f9cf7a"/>
<path d="M2136 134.5L2137.5 133Q2138.5 132 2139.5 133L2140 133.5Q2141 134.5 2140 135.5L2138.5 137Z" fill="#e86060"/>
<rect x="2106.5" y="155.5" width="35" height="32" fill="#45566c" stroke="#6ec3f7" stroke-width="1.5"/>
<path d="M2116 161H2113.8V182H2116" fill="none" stroke="#f4f4f4" stroke-width="1.2" />
<path d="M2129 161H2131.2V182H2129" fill="none" stroke="#f4f4f4" stroke-width="1.2" />
<rect x="2117" y="163" width="8" height="6.5" fill="#3d6a66" stroke="#5cd87c" stroke-width="1.2"/>
<circle cx="2121" cy="175.5" r="3.8" fill="#3d6a66" stroke="#5cd87c" stroke-width="1.2"/>
<path d="M2128.5 168.5V184L2132 180.5L2135 186L2137 185L2134.5 179.5H2139Z" fill="#f4f4f4"/>
<rect x="2179.6" y="105.7" width="42.4" height="11.3" fill="#f9cf7a" />
<path d="M2182 105.7V110.5" fill="none" stroke="#5a4a2a" stroke-width="0.9" />
<path d="M2185 105.7V108.5" fill="none" stroke="#5a4a2a" stroke-width="0.9" />
<path d="M2188 105.7V110.5" fill="none" stroke="#5a4a2a" stroke-width="0.9" />
<path d="M2191 105.7V108.5" fill="none" stroke="#5a4a2a" stroke-width="0.9" />
<path d="M2194 105.7V110.5" fill="none" stroke="#5a4a2a" stroke-width="0.9" />
<path d="M2197 105.7V108.5" fill="none" stroke="#5a4a2a" stroke-width="0.9" />
<path d="M2200 105.7V110.5" fill="none" stroke="#5a4a2a" stroke-width="0.9" />
<path d="M2203 105.7V108.5" fill="none" stroke="#5a4a2a" stroke-width="0.9" />
<path d="M2206 105.7V110.5" fill="none" stroke="#5a4a2a" stroke-width="0.9" />
<path d="M2209 105.7V108.5" fill="none" stroke="#5a4a2a" stroke-width="0.9" />
<path d="M2212 105.7V110.5" fill="none" stroke="#5a4a2a" stroke-width="0.9" />
<path d="M2215 105.7V108.5" fill="none" stroke="#5a4a2a" stroke-width="0.9" />
<path d="M2218 105.7V110.5" fill="none" stroke="#5a4a2a" stroke-width="0.9" />
<path d="M2221 105.7V108.5" fill="none" stroke="#5a4a2a" stroke-width="0.9" />
<rect x="2269" y="99" width="14" height="14" fill="#f0f0f0" />
<rect x="2272" y="101.5" width="2" height="2" fill="#1e88e5" />
<rect x="2275" y="101.9" width="5" height="1.2" fill="#1e88e5" />
<rect x="2272" y="104.5" width="2" height="2" fill="#1e88e5" />
<rect x="2275" y="104.9" width="5" height="1.2" fill="#1e88e5" />
<rect x="2272" y="107.5" width="2" height="2" fill="#1e88e5" />
<rect x="2275" y="107.9" width="5" height="1.2" fill="#1e88e5" />
<path d="M2259 96V112L2262.5 108.5L2265 113.5L2267.3 112.4L2265 107.5H2269.5Z" fill="#f4f4f4"/>
<path d="M2270 89L2263 96.5H2267L2264.5 101L2273.5 94H2269.5L2271.5 89Z" fill="#f5c96b"/>
<rect x="2259" y="125.5" width="21.5" height="21.5" fill="none" stroke="#5cd87c" stroke-width="1.2" stroke-dasharray="2.2 1.3"/>
<rect x="2262" y="131" width="10" height="12" fill="#80d8a0" />
<rect x="2266" y="128" width="12" height="11" fill="#80d8a0" stroke="#3b4453" stroke-width="1"/>
<path d="M2273 134V148.5L2276.3 145.2L2278.8 150.2L2281 149.2L2278.6 144.3H2283Z" fill="#f4f4f4"/>
<rect x="2261" y="162.5" width="17" height="23" fill="#c8c8c8" />
<rect x="2263" y="164.5" width="13" height="5" fill="#6a6a6a" />
<rect x="2263.0" y="172.0" width="3" height="3" fill="#6a6a6a" />
<rect x="2267.5" y="172.0" width="3" height="3" fill="#6a6a6a" />
<rect x="2272.0" y="172.0" width="3" height="3" fill="#6a6a6a" />
<rect x="2263.0" y="176.3" width="3" height="3" fill="#6a6a6a" />
<rect x="2267.5" y="176.3" width="3" height="3" fill="#6a6a6a" />
<rect x="2272.0" y="176.3" width="3" height="3" fill="#6a6a6a" />
<rect x="2263.0" y="180.6" width="3" height="3" fill="#6a6a6a" />
<rect x="2267.5" y="180.6" width="3" height="3" fill="#6a6a6a" />
<rect x="2272.0" y="180.6" width="3" height="3" fill="#6a6a6a" />
<rect x="2315" y="93" width="33" height="37" fill="#d9ae78" />
<path d="M2322.5 95V92H2327Q2327 88 2331.5 88Q2336 88 2336 92H2340.5V95Z" fill="#f4f4f4" stroke="#3b4453" stroke-width="0.8"/>
<path d="M2326 103H2343.5L2353 112.5V136H2326Z" fill="#d6d6d6" stroke="#2a303a" stroke-width="0.9"/>
<path d="M2343.5 103.5V112.5H2352.5Z" fill="#efefef"/>
<rect x="2379" y="89" width="18" height="21" fill="#d6d6d6" stroke="#2a303a" stroke-width="0.8"/>
<path d="M2382 93.5H2394M2382 99H2392M2382 104.5H2391" fill="none" stroke="#6b6b6b" stroke-width="0.9" />
<path d="M2390 96.5L2399 108M2403 98L2395 108" fill="none" stroke="#f8f8f8" stroke-width="1.5" />
<circle cx="2393.5" cy="110.5" r="2.4" fill="none" stroke="#f8f8f8" stroke-width="1.4"/><circle cx="2400.5" cy="110.5" r="2.4" fill="none" stroke="#f8f8f8" stroke-width="1.4"/>
<path d="M2381.5 125H2392L2394 127V145H2381.5Z" fill="#d6d6d6" stroke="#2a303a" stroke-width="0.8"/>
<path d="M2385.5 129.5H2396L2400.5 134V149H2385.5Z" fill="#d6d6d6" stroke="#2a303a" stroke-width="0.8"/>
<path d="M2396 130V134H2400Z" fill="#efefef"/>
<path d="M2452.8 93H2474.3V110H2500.8V128.8H2452.8Z" fill="#d9d9d9"/>
<rect x="1153.6" y="57" width="23.2" height="10.7" fill="#f0f0f0" />
<path d="M1160 65H1170L1165 59.5Z" fill="#333"/>
<path d="M1182.0 60.6h8l-4.0 4z" fill="#d8d8d8"/>
<path d="M2027 207L2034.5 214.5M2034.5 209V214.5H2029" fill="none" stroke="#d8d8d8" stroke-width="1.3" />
<path d="M2509 207L2516.5 214.5M2516.5 209V214.5H2511" fill="none" stroke="#d8d8d8" stroke-width="1.3" />
<path d="M18 259L29 235" fill="none" stroke="#525a68" stroke-width="1.4" />
<path d="M293 259L304 235" fill="none" stroke="#525a68" stroke-width="1.4" />
<path d="M218 242L228.5 252.5M228.5 242L218 252.5" fill="none" stroke="#a6a9b2" stroke-width="2.8" />
<path d="M268 238V256M259 247H277" fill="none" stroke="#e6e6e6" stroke-width="2.6" />
<rect x="2463" y="292" width="17" height="7" fill="#e8e8e8" stroke="#111" stroke-width="1.2"/>
<rect x="2497" y="283" width="13" height="13" fill="#e0e0e0" stroke="#111" stroke-width="1"/>
<rect x="2493" y="287" width="13" height="13" fill="#f0f0f0" stroke="#111" stroke-width="1"/>
<rect x="2496.5" y="290.5" width="6" height="6" fill="#1a1a1a" />
<path d="M2524.5 285.5L2539 299.5M2539 285.5L2524.5 299.5" fill="none" stroke="#f4f4f4" stroke-width="3.2" />
<path d="M2035.5 715V843" fill="none" stroke="#7878f0" stroke-width="1.6" />
<path d="M1974 767.4L2066.2 816.4" fill="none" stroke="#5adc5a" stroke-width="1.6" />
<path d="M1999.3 813.4L2108.8 773.3" fill="none" stroke="#e06a6a" stroke-width="1.6" />
<rect x="2031.5" y="796.3" width="8" height="8" fill="#212830" stroke="#f4f4f4" stroke-width="1.4"/>
<path d="M1298.3 1164.3V1097M1298.3 1164.3L1250.2 1138.8M1298.3 1164.3L1356 1142.5" fill="none" stroke="#f0f0f0" stroke-width="1.5" />
<path d="M1290 1164.5L1298.3 1160.5L1307 1164.5L1298.3 1168.5Z" fill="none" stroke="#f0f0f0" stroke-width="1.3" />
<path d="M1303.5 1078H1321L1303.5 1096.3H1321" fill="none" stroke="#d8d8d8" stroke-width="1.5" />
<path d="M1252 1115.5L1261 1125M1270 1115.5L1261 1125V1134" fill="none" stroke="#c8c8c8" stroke-width="1.5" />
<path d="M1361 1122.5L1379.5 1141M1379.5 1122.5L1361 1141" fill="none" stroke="#d8d8d8" stroke-width="1.5" />
<text x="0" y="0" font-size="17" fill="#d8d8d8" textLength="201" lengthAdjust="spacingAndGlyphs" transform="translate(28.5 972) rotate(-90)">Layer Properties Manager</text>
<path d="M165 1510L175 1486" fill="none" stroke="#525a68" stroke-width="1.4" />
<path d="M225 1510L236 1486" fill="none" stroke="#525a68" stroke-width="1.4" />
<path d="M200 1489V1507M191 1498H209" fill="none" stroke="#e6e6e6" stroke-width="2.6" />
<text x="42" y="253.5" font-size="19" fill="#f0f0f0" textLength="36" lengthAdjust="spacingAndGlyphs"  xml:space="preserve">Start</text>
<text x="114" y="253.5" font-size="19" fill="#ffffff" textLength="89" lengthAdjust="spacingAndGlyphs" font-weight="bold"  xml:space="preserve">Drawing2*</text>
<text x="45.5" y="296.5" font-size="19" fill="#f0f0f0" textLength="5" lengthAdjust="spacingAndGlyphs"  xml:space="preserve">[</text>
<rect x="52" y="287.3" width="10.3" height="1.6" fill="#f0f0f0" />
<text x="64.5" y="296.5" font-size="19" fill="#f0f0f0" textLength="5" lengthAdjust="spacingAndGlyphs"  xml:space="preserve">]</text>
<text x="71" y="296.5" font-size="19" fill="#f0f0f0" textLength="236" lengthAdjust="spacingAndGlyphs"  xml:space="preserve">[Custom View][2D Wireframe]</text>
<path d="M1298.5 1164.7L1298.5 714.3M1298.5 1164.7L974.9 987.8M1298.5 1164.7L1687.2 1017.9M1298.5 714.3L974.9 537.4M1298.5 714.3L1687.2 567.5M974.9 987.8L974.9 537.4M974.9 987.8L1363.6 841.0M974.9 537.4L1363.6 390.6M1687.2 1017.9L1687.2 567.5M1687.2 1017.9L1363.6 841.0M1687.2 567.5L1363.6 390.6M1363.6 841.0L1363.6 390.6" stroke="#e6ae08" stroke-width="1.35" fill="none"/>
<g fill="none" stroke="#e404cc" stroke-width="1.5" vector-effect="non-scaling-stroke"><ellipse rx="1" ry="1" vector-effect="non-scaling-stroke" transform="matrix(27.599 -10.422 -22.977 -12.559 1330.30 583.98)"/><ellipse rx="1" ry="1" vector-effect="non-scaling-stroke" transform="matrix(39.031 -14.739 -32.494 -17.761 1330.30 552.00)"/><ellipse rx="1" ry="1" vector-effect="non-scaling-stroke" transform="matrix(27.599 -10.422 -22.977 -12.559 1330.30 520.02)"/><ellipse rx="1" ry="1" vector-effect="non-scaling-stroke" transform="matrix(0.000 -45.220 39.031 -14.739 1330.30 552.00)"/><ellipse rx="1" ry="1" vector-effect="non-scaling-stroke" transform="matrix(0.000 -45.220 -32.494 -17.761 1330.30 552.00)"/><ellipse rx="1" ry="1" vector-effect="non-scaling-stroke" transform="matrix(-22.977 -12.559 0.000 -31.975 1417.40 557.82)"/><ellipse rx="1" ry="1" vector-effect="non-scaling-stroke" transform="matrix(-32.494 -17.761 0.000 -45.220 1445.00 547.40)"/><ellipse rx="1" ry="1" vector-effect="non-scaling-stroke" transform="matrix(-22.977 -12.559 0.000 -31.975 1472.60 536.98)"/><ellipse rx="1" ry="1" vector-effect="non-scaling-stroke" transform="matrix(39.031 -14.739 -32.494 -17.761 1445.00 547.40)"/><ellipse rx="1" ry="1" vector-effect="non-scaling-stroke" transform="matrix(39.031 -14.739 0.000 -45.220 1445.00 547.40)"/><ellipse rx="1" ry="1" vector-effect="non-scaling-stroke" transform="matrix(-22.977 -12.559 0.000 -31.975 1578.40 646.22)"/><ellipse rx="1" ry="1" vector-effect="non-scaling-stroke" transform="matrix(-32.494 -17.761 0.000 -45.220 1606.00 635.80)"/><ellipse rx="1" ry="1" vector-effect="non-scaling-stroke" transform="matrix(-22.977 -12.559 0.000 -31.975 1633.60 625.38)"/><ellipse rx="1" ry="1" vector-effect="non-scaling-stroke" transform="matrix(39.031 -14.739 -32.494 -17.761 1606.00 635.80)"/><ellipse rx="1" ry="1" vector-effect="non-scaling-stroke" transform="matrix(39.031 -14.739 0.000 -45.220 1606.00 635.80)"/><ellipse rx="1" ry="1" vector-effect="non-scaling-stroke" transform="matrix(-22.977 -12.559 0.000 -31.975 1028.10 705.12)"/><ellipse rx="1" ry="1" vector-effect="non-scaling-stroke" transform="matrix(-32.494 -17.761 0.000 -45.220 1055.70 694.70)"/><ellipse rx="1" ry="1" vector-effect="non-scaling-stroke" transform="matrix(-22.977 -12.559 0.000 -31.975 1083.30 684.28)"/><ellipse rx="1" ry="1" vector-effect="non-scaling-stroke" transform="matrix(39.031 -14.739 -32.494 -17.761 1055.70 694.70)"/><ellipse rx="1" ry="1" vector-effect="non-scaling-stroke" transform="matrix(39.031 -14.739 0.000 -45.220 1055.70 694.70)"/><ellipse rx="1" ry="1" vector-effect="non-scaling-stroke" transform="matrix(-22.977 -12.559 0.000 -31.975 1417.40 783.22)"/><ellipse rx="1" ry="1" vector-effect="non-scaling-stroke" transform="matrix(-32.494 -17.761 0.000 -45.220 1445.00 772.80)"/><ellipse rx="1" ry="1" vector-effect="non-scaling-stroke" transform="matrix(-22.977 -12.559 0.000 -31.975 1472.60 762.38)"/><ellipse rx="1" ry="1" vector-effect="non-scaling-stroke" transform="matrix(39.031 -14.739 -32.494 -17.761 1445.00 772.80)"/><ellipse rx="1" ry="1" vector-effect="non-scaling-stroke" transform="matrix(39.031 -14.739 0.000 -45.220 1445.00 772.80)"/><ellipse rx="1" ry="1" vector-effect="non-scaling-stroke" transform="matrix(-22.977 -12.559 0.000 -31.975 1108.90 860.72)"/><ellipse rx="1" ry="1" vector-effect="non-scaling-stroke" transform="matrix(-32.494 -17.761 0.000 -45.220 1136.50 850.30)"/><ellipse rx="1" ry="1" vector-effect="non-scaling-stroke" transform="matrix(-22.977 -12.559 0.000 -31.975 1164.10 839.88)"/><ellipse rx="1" ry="1" vector-effect="non-scaling-stroke" transform="matrix(39.031 -14.739 -32.494 -17.761 1136.50 850.30)"/><ellipse rx="1" ry="1" vector-effect="non-scaling-stroke" transform="matrix(39.031 -14.739 0.000 -45.220 1136.50 850.30)"/><ellipse rx="1" ry="1" vector-effect="non-scaling-stroke" transform="matrix(-22.977 -12.559 0.000 -31.975 1578.40 871.72)"/><ellipse rx="1" ry="1" vector-effect="non-scaling-stroke" transform="matrix(-32.494 -17.761 0.000 -45.220 1606.00 861.30)"/><ellipse rx="1" ry="1" vector-effect="non-scaling-stroke" transform="matrix(-22.977 -12.559 0.000 -31.975 1633.60 850.88)"/><ellipse rx="1" ry="1" vector-effect="non-scaling-stroke" transform="matrix(39.031 -14.739 -32.494 -17.761 1606.00 861.30)"/><ellipse rx="1" ry="1" vector-effect="non-scaling-stroke" transform="matrix(39.031 -14.739 0.000 -45.220 1606.00 861.30)"/><ellipse rx="1" ry="1" vector-effect="non-scaling-stroke" transform="matrix(27.599 -10.422 -22.977 -12.559 1347.00 954.18)"/><ellipse rx="1" ry="1" vector-effect="non-scaling-stroke" transform="matrix(39.031 -14.739 -32.494 -17.761 1347.00 922.20)"/><ellipse rx="1" ry="1" vector-effect="non-scaling-stroke" transform="matrix(27.599 -10.422 -22.977 -12.559 1347.00 890.22)"/><ellipse rx="1" ry="1" vector-effect="non-scaling-stroke" transform="matrix(0.000 -45.220 39.031 -14.739 1347.00 922.20)"/><ellipse rx="1" ry="1" vector-effect="non-scaling-stroke" transform="matrix(0.000 -45.220 -32.494 -17.761 1347.00 922.20)"/><ellipse rx="1" ry="1" vector-effect="non-scaling-stroke" transform="matrix(27.599 -10.422 -22.977 -12.559 1249.50 991.38)"/><ellipse rx="1" ry="1" vector-effect="non-scaling-stroke" transform="matrix(39.031 -14.739 -32.494 -17.761 1249.50 959.40)"/><ellipse rx="1" ry="1" vector-effect="non-scaling-stroke" transform="matrix(27.599 -10.422 -22.977 -12.559 1249.50 927.42)"/><ellipse rx="1" ry="1" vector-effect="non-scaling-stroke" transform="matrix(0.000 -45.220 39.031 -14.739 1249.50 959.40)"/><ellipse rx="1" ry="1" vector-effect="non-scaling-stroke" transform="matrix(0.000 -45.220 -32.494 -17.761 1249.50 959.40)"/><ellipse rx="1" ry="1" vector-effect="non-scaling-stroke" transform="matrix(27.599 -10.422 -22.977 -12.559 1152.90 1027.98)"/><ellipse rx="1" ry="1" vector-effect="non-scaling-stroke" transform="matrix(39.031 -14.739 -32.494 -17.761 1152.90 996.00)"/><ellipse rx="1" ry="1" vector-effect="non-scaling-stroke" transform="matrix(27.599 -10.422 -22.977 -12.559 1152.90 964.02)"/><ellipse rx="1" ry="1" vector-effect="non-scaling-stroke" transform="matrix(0.000 -45.220 39.031 -14.739 1152.90 996.00)"/><ellipse rx="1" ry="1" vector-effect="non-scaling-stroke" transform="matrix(0.000 -45.220 -32.494 -17.761 1152.90 996.00)"/><ellipse rx="1" ry="1" vector-effect="non-scaling-stroke" transform="matrix(-22.977 -12.559 0.000 -31.975 1189.90 1019.42)"/><ellipse rx="1" ry="1" vector-effect="non-scaling-stroke" transform="matrix(-32.494 -17.761 0.000 -45.220 1217.50 1009.00)"/><ellipse rx="1" ry="1" vector-effect="non-scaling-stroke" transform="matrix(-22.977 -12.559 0.000 -31.975 1245.10 998.58)"/><ellipse rx="1" ry="1" vector-effect="non-scaling-stroke" transform="matrix(39.031 -14.739 -32.494 -17.761 1217.50 1009.00)"/><ellipse rx="1" ry="1" vector-effect="non-scaling-stroke" transform="matrix(39.031 -14.739 0.000 -45.220 1217.50 1009.00)"/><ellipse rx="1" ry="1" vector-effect="non-scaling-stroke" transform="matrix(27.599 -10.422 -22.977 -12.559 1411.60 1080.08)"/><ellipse rx="1" ry="1" vector-effect="non-scaling-stroke" transform="matrix(39.031 -14.739 -32.494 -17.761 1411.60 1048.10)"/><ellipse rx="1" ry="1" vector-effect="non-scaling-stroke" transform="matrix(27.599 -10.422 -22.977 -12.559 1411.60 1016.12)"/><ellipse rx="1" ry="1" vector-effect="non-scaling-stroke" transform="matrix(0.000 -45.220 39.031 -14.739 1411.60 1048.10)"/><ellipse rx="1" ry="1" vector-effect="non-scaling-stroke" transform="matrix(0.000 -45.220 -32.494 -17.761 1411.60 1048.10)"/><ellipse rx="1" ry="1" vector-effect="non-scaling-stroke" transform="matrix(27.599 -10.422 -22.977 -12.559 1509.30 1042.88)"/><ellipse rx="1" ry="1" vector-effect="non-scaling-stroke" transform="matrix(39.031 -14.739 -32.494 -17.761 1509.30 1010.90)"/><ellipse rx="1" ry="1" vector-effect="non-scaling-stroke" transform="matrix(27.599 -10.422 -22.977 -12.559 1509.30 978.92)"/><ellipse rx="1" ry="1" vector-effect="non-scaling-stroke" transform="matrix(0.000 -45.220 39.031 -14.739 1509.30 1010.90)"/><ellipse rx="1" ry="1" vector-effect="non-scaling-stroke" transform="matrix(0.000 -45.220 -32.494 -17.761 1509.30 1010.90)"/><ellipse rx="1" ry="1" vector-effect="non-scaling-stroke" transform="matrix(27.599 -10.422 -22.977 -12.559 1314.50 1116.58)"/><ellipse rx="1" ry="1" vector-effect="non-scaling-stroke" transform="matrix(39.031 -14.739 -32.494 -17.761 1314.50 1084.60)"/><ellipse rx="1" ry="1" vector-effect="non-scaling-stroke" transform="matrix(27.599 -10.422 -22.977 -12.559 1314.50 1052.62)"/><ellipse rx="1" ry="1" vector-effect="non-scaling-stroke" transform="matrix(0.000 -45.220 39.031 -14.739 1314.50 1084.60)"/><ellipse rx="1" ry="1" vector-effect="non-scaling-stroke" transform="matrix(0.000 -45.220 -32.494 -17.761 1314.50 1084.60)"/></g>
<rect x="572" y="1287" width="37" height="187" fill="#2b313b" />
<rect x="609" y="1289" width="1409" height="154" fill="#98999b" />
<rect x="609" y="1443" width="1409" height="1" fill="#2a2e35" />
<path d="M609 1444H2018.5V1470Q2018.5 1473 2015.5 1473H609Z" fill="#bfbfc1"/>
<text x="613" y="1319.0" font-size="18.3" fill="#111111" style='font-family:"Liberation Mono", monospace' stroke="#111111" stroke-width="0.35" xml:space="preserve">Specify second source point:</text>
<text x="613" y="1341.9" font-size="18.3" fill="#111111" style='font-family:"Liberation Mono", monospace' stroke="#111111" stroke-width="0.35" xml:space="preserve">Specify second destination point:</text>
<text x="613" y="1364.8" font-size="18.3" fill="#111111" style='font-family:"Liberation Mono", monospace' stroke="#111111" stroke-width="0.35" xml:space="preserve">Specify third source point or &lt;continue&gt;:</text>
<text x="613" y="1387.7" font-size="18.3" fill="#111111" style='font-family:"Liberation Mono", monospace' stroke="#111111" stroke-width="0.35" xml:space="preserve">Specify third destination point:</text>
<text x="613" y="1410.6" font-size="18.3" fill="#111111" style='font-family:"Liberation Mono", monospace' stroke="#111111" stroke-width="0.35" xml:space="preserve">Command:  Regenerating model.</text>
<text x="613" y="1433.5" font-size="18.3" fill="#111111" style='font-family:"Liberation Mono", monospace' stroke="#111111" stroke-width="0.35" xml:space="preserve">Command:  Regenerating model.</text>
<text x="664" y="1465" font-size="18.4" fill="#6b6b6b" font-style="italic" style='font-family:"Liberation Mono", monospace'  xml:space="preserve">Type a command</text>
<rect x="577.5" y="1294" width="2" height="2" fill="#c8c8c8" />
<rect x="581.9" y="1294" width="2" height="2" fill="#c8c8c8" />
<rect x="586.3" y="1294" width="2" height="2" fill="#c8c8c8" />
<rect x="590.7" y="1294" width="2" height="2" fill="#c8c8c8" />
<rect x="595.1" y="1294" width="2" height="2" fill="#c8c8c8" />
<rect x="599.5" y="1294" width="2" height="2" fill="#c8c8c8" />
<path d="M583.5 1315.5L596.5 1328.5M596.5 1315.5L583.5 1328.5" fill="none" stroke="#d0d0d0" stroke-width="2.8" />
<path d="M581 1368.5L592.5 1357" fill="none" stroke="#c8c8c8" stroke-width="3" stroke-linecap="round"/>
<path d="M591 1358.5A6 6 0 0 1 598 1348L594.5 1351.5L596.5 1353.5L600 1350A6 6 0 0 1 590 1357Z" fill="#c8c8c8"/>
<rect x="616.5" y="1451" width="23.5" height="17" fill="none" stroke="#555" stroke-width="1.3"/>
<rect x="616.5" y="1451" width="23.5" height="3.5" fill="#555" />
<path d="M619 1459L622 1461.5L619 1464M623 1465H627" fill="none" stroke="#555" stroke-width="1" />
<path d="M648.0 1457.0h8l-4.0 4z" fill="#555"/>
<path d="M2003 1462H2014L2008.5 1456.2Z" fill="#555"/>
<text x="42" y="1506.5" font-size="19" fill="#ffffff" textLength="54" lengthAdjust="spacingAndGlyphs" font-weight="bold"  xml:space="preserve">Model</text>
<text x="133" y="1506.5" font-size="19" fill="#f0f0f0" textLength="18" lengthAdjust="spacingAndGlyphs"  xml:space="preserve">a3</text>
<rect x="1684" y="1484" width="72" height="36" fill="#3b4453" />
<rect x="1762" y="1484" width="96" height="36" fill="#3b4453" />
<rect x="1864" y="1484" width="36" height="36" fill="#3b4453" />
<rect x="1902" y="1484" width="156" height="36" fill="#3b4453" />
<rect x="2097" y="1484" width="59" height="36" fill="#3b4453" />
<rect x="2163" y="1484" width="157" height="36" fill="#3b4453" />
<rect x="2326" y="1484" width="60" height="36" fill="#3b4453" />
<rect x="2388" y="1484" width="36" height="36" fill="#3b4453" />
<rect x="2430" y="1484" width="36" height="36" fill="#3b4453" />
<rect x="2470" y="1484" width="4" height="36" fill="#3b4453" />
<rect x="2478" y="1484" width="72" height="36" fill="#3b4453" />
<rect x="2061" y="1485" width="34" height="34" fill="#5b8fc7" />
<rect x="2097" y="1485" width="34" height="34" fill="#5b8fc7" />
<rect x="2163" y="1485" width="34" height="34" fill="#5b8fc7" />
<text x="1690" y="1508.8" font-size="18.6" fill="#ffffff" textLength="61" lengthAdjust="spacingAndGlyphs"  xml:space="preserve">MODEL</text>
<path d="M1773.4 1490V1513M1779.4 1490V1513M1785.5 1490V1513M1768 1495.3H1791M1768 1501.5H1791M1768 1507.5H1791" fill="none" stroke="#eeeeee" stroke-width="1.2" />
<rect x="1806.8000000000002" y="1492.9" width="3.2" height="3.2" fill="#eeeeee" />
<rect x="1806.8000000000002" y="1499.9" width="3.2" height="3.2" fill="#eeeeee" />
<rect x="1806.8000000000002" y="1506.9" width="3.2" height="3.2" fill="#eeeeee" />
<rect x="1813.9" y="1492.9" width="3.2" height="3.2" fill="#eeeeee" />
<rect x="1813.9" y="1499.9" width="3.2" height="3.2" fill="#eeeeee" />
<rect x="1813.9" y="1506.9" width="3.2" height="3.2" fill="#eeeeee" />
<rect x="1821.0" y="1492.9" width="3.2" height="3.2" fill="#eeeeee" />
<rect x="1821.0" y="1499.9" width="3.2" height="3.2" fill="#eeeeee" />
<rect x="1821.0" y="1506.9" width="3.2" height="3.2" fill="#eeeeee" />
<path d="M1840.0 1499.0h12l-6.0 6z" fill="#d8d8d8"/>
<path d="M1875.4 1493V1504M1870 1498.5H1881" fill="none" stroke="#eeeeee" stroke-width="1.2" />
<rect x="1879.5" y="1505" width="14.5" height="6" fill="#d8d8d8" stroke="#d8d8d8" stroke-width="1"/>
<rect x="1880.5" y="1506" width="1.8" height="4" fill="#333" />
<path d="M1908.5 1490V1513.5H1932M1908.5 1506.5H1915.5V1513.5" fill="none" stroke="#eeeeee" stroke-width="1.2" />
<circle cx="1953.6" cy="1502.2" r="9.5" fill="none" stroke="#eeeeee" stroke-width="1.2"/>
<path d="M1953.6 1502.2H1968M1953.6 1502.2L1964 1492" fill="none" stroke="#eeeeee" stroke-width="1.2" />
<path d="M1980.0 1499.0h12l-6.0 6z" fill="#d8d8d8"/>
<path d="M2016.4 1490V1512" fill="none" stroke="#5adc6a" stroke-width="1.4" />
<path d="M2007 1492L2025 1510" fill="none" stroke="#e06a6a" stroke-width="1.2" />
<rect x="2014.4" y="1499.3" width="4" height="4" fill="#2b313b" stroke="#f0f0f0" stroke-width="1.2"/>
<path d="M2040.0 1499.0h12l-6.0 6z" fill="#d8d8d8"/>
<path d="M2066.2 1510.4L2083.6 1493M2066.2 1510.4H2090" fill="none" stroke="#ffffff" stroke-width="1.4" />
<rect x="2073" y="1500" width="4.5" height="4.5" fill="#ffffff" />
<path d="M2109 1493.5H2126V1513.8H2105V1497" fill="none" stroke="#ffffff" stroke-width="1.4" />
<rect x="2102.3" y="1490.3" width="6.8" height="6.5" fill="none" stroke="#ffffff" stroke-width="1.3"/>
<path d="M2138.0 1499.0h12l-6.0 6z" fill="#d8d8d8"/>
<path d="M2178.3 1490L2182.3 1500L2180.8 1501.5L2189.0 1514L2178.3 1508L2167.6000000000004 1514L2175.8 1501.5L2174.3 1500Z" fill="#ffffff"/>
<circle cx="2187.5" cy="1495.5" r="4" fill="none" stroke="#ffffff" stroke-width="1.3"/>
<path d="M2214.5 1490L2218.5 1500L2217.0 1501.5L2225.2 1514L2214.5 1508L2203.8 1514L2212.0 1501.5L2210.5 1500Z" fill="#d8d8d8"/>
<path d="M2226 1490L2220.5 1497H2224L2220 1503L2227.5 1495.5H2224.5Z" fill="#d8d8d8"/>
<path d="M2251.3 1490L2255.3 1500L2253.8 1501.5L2262.0 1514L2251.3 1508L2240.6000000000004 1514L2248.8 1501.5L2247.3 1500Z" fill="#d8d8d8"/>
<text x="2278" y="1508.8" font-size="18" fill="#ffffff" textLength="17" lengthAdjust="spacingAndGlyphs" font-weight="bold"  xml:space="preserve">1:1</text>
<path d="M2302.0 1499.0h12l-6.0 6z" fill="#d8d8d8"/>
<path d="M2355.98 1499.67L2355.98 1504.33L2352.80 1504.69L2352.12 1506.32L2354.11 1508.82L2350.82 1512.11L2348.32 1510.12L2346.69 1510.80L2346.33 1513.98L2341.67 1513.98L2341.31 1510.80L2339.68 1510.12L2337.18 1512.11L2333.89 1508.82L2335.88 1506.32L2335.20 1504.69L2332.02 1504.33L2332.02 1499.67L2335.20 1499.31L2335.88 1497.68L2333.89 1495.18L2337.18 1491.89L2339.68 1493.88L2341.31 1493.20L2341.67 1490.02L2346.33 1490.02L2346.69 1493.20L2348.32 1493.88L2350.82 1491.89L2354.11 1495.18L2352.12 1497.68L2352.80 1499.31Z" fill="#d8d8d8"/>
<circle cx="2344" cy="1502" r="4.2" fill="#3b4453"/>
<path d="M2368.0 1499.0h12l-6.0 6z" fill="#d8d8d8"/>
<rect x="2403.8" y="1490.5" width="3.6" height="23" fill="#e6e6e6" />
<rect x="2394" y="1500.2" width="23.2" height="3.6" fill="#e6e6e6" />
<path d="M2436.2 1490.3H2445.8V1499.8H2436.2Z" fill="none" stroke="#eeeeee" stroke-width="1.2" />
<circle cx="2454.4" cy="1500.5" r="5.3" fill="none" stroke="#eeeeee" stroke-width="1.2"/>
<path d="M2440.2 1513.6H2451L2445.6 1504.8Z" fill="none" stroke="#eeeeee" stroke-width="1.2" />
<rect x="2484.5" y="1493.5" width="23.5" height="16.5" fill="none" stroke="#eeeeee" stroke-width="1.2"/>
<path d="M2486.5 1507.5L2492 1502M2505.5 1495.5L2500 1501" fill="none" stroke="#eeeeee" stroke-width="1.3" />
<path d="M2486 1508H2492L2486 1502Z" fill="#eeeeee"/>
<path d="M2506 1495H2500L2506 1501Z" fill="#eeeeee"/>
<rect x="2520" y="1491" width="24" height="3" fill="#e0e0e0" />
<rect x="2520" y="1500" width="24" height="3" fill="#e0e0e0" />
<rect x="2520" y="1509" width="24" height="3" fill="#e0e0e0" />
<ellipse cx="2428" cy="473.2" rx="86" ry="38" fill="none" stroke="#62666e" stroke-width="22"/>
<text x="0" y="0" font-size="24" font-weight="bold" fill="#c8cace" transform="translate(2350 507) rotate(-24) scale(1.75 0.78)" text-anchor="middle">W</text>
<text x="0" y="0" font-size="24" font-weight="bold" fill="#c8cace" transform="translate(2493 513) rotate(30) scale(1.45 0.85)" text-anchor="middle">S</text>
<text x="0" y="0" font-size="24" font-weight="bold" fill="#c8cace" transform="translate(2492.5 444) rotate(-30) scale(1.25 0.8)" text-anchor="middle">E</text>
<text x="0" y="0" font-size="24" font-weight="bold" fill="#c8cace" transform="translate(2371 440) rotate(28) scale(1.3 0.75)" text-anchor="middle">N</text>
<defs><filter id="blr" x="-50%" y="-50%" width="200%" height="200%"><feGaussianBlur stdDeviation="6"/></filter></defs>
<path d="M2380 460L2423 488L2478 462L2470 452L2423 470L2388 450Z" fill="#15191f" filter="url(#blr)" opacity="0.9"/>
<path d="M2376.6 393.2L2431.3 376.2L2480.1 396.9L2422.4 416.6Z" fill="#dcdee0"/>
<defs><linearGradient id="cg" x1="0" y1="0" x2="0" y2="1"><stop offset="0" stop-color="#d9dbdd"/><stop offset="1" stop-color="#b9bbbe"/></linearGradient></defs>
<path d="M2376.6 393.2L2422.4 416.6L2423.2 485.3L2379.5 457Z" fill="url(#cg)"/>
<path d="M2422.4 416.6L2480.1 396.9L2477.4 461L2423.2 485.3Z" fill="url(#cg)"/>
<path d="M2422.4 416.6V485.3" fill="none" stroke="#8a8c90" stroke-width="0.8" stroke-dasharray="3 2"/>
<path d="M2376.6 393.2L2422.4 416.6L2480.1 396.9" fill="none" stroke="#8a8c90" stroke-width="0.7" stroke-dasharray="3 2"/>
<path d="M2414 410L2422.4 405.5L2431 410L2431 424L2422.4 428L2414 424Z" fill="#c8ccd6" opacity="0.9"/>
<text x="0" y="0" font-size="11" font-weight="bold" fill="#6a6d73" transform="translate(2412 402) rotate(-22) scale(1.2 0.85)">TOP</text>
<text x="0" y="0" font-size="13" font-weight="bold" fill="#6a6d73" textLength="22" lengthAdjust="spacingAndGlyphs" transform="translate(2389.5 439) skewY(30) scale(1 1.35)">LEFT</text>
<text x="0" y="0" font-size="13" font-weight="bold" fill="#6a6d73" textLength="40" lengthAdjust="spacingAndGlyphs" transform="translate(2432 455) skewY(-22) scale(1 1.35)">FRONT</text>
<rect x="2394" y="558.6" width="69" height="25.5" rx="4" fill="#c9ccd8" stroke="#b0b3be" stroke-width="1"/>
<text x="2401" y="577" font-size="15" fill="#5e6168" textLength="34" lengthAdjust="spacingAndGlyphs"  xml:space="preserve">WCS</text>
<path d="M2444 567.5H2455L2449.5 573.5Z" fill="none" stroke="#8a8d96" stroke-width="1" />
<rect x="2501.5" y="617.5" width="47" height="312" rx="3.5" fill="#0f1115"/>
<rect x="2502.5" y="618.5" width="45" height="310" rx="3" fill="#808388" stroke="#9a9da2" stroke-width="1"/>
<circle cx="2538.5" cy="625" r="3.6" fill="none" stroke="#5e6168" stroke-width="1.2"/>
<circle cx="2524" cy="658.5" r="15" fill="none" stroke="#5e6168" stroke-width="2"/><circle cx="2524" cy="658" r="8" fill="none" stroke="#5e6168" stroke-width="2"/>
<path d="M2521.5 687.25h7l-3.5 3.5z" fill="#5e6168"/>
<path d="M2513 726Q2510 722 2513 720L2519 724V705Q2521 703 2523 705V717V702Q2525 700 2527 702V717V704Q2529 702 2531 704V718V708Q2533 706 2535 708V725Q2534 738 2524 740Q2518 739 2513 726Z" fill="none" stroke="#5e6168" stroke-width="1.8"/>
<path d="M2507 749L2530 772M2530 749L2507 772" fill="none" stroke="#5e6168" stroke-width="1.6" />
<circle cx="2533" cy="773" r="6.5" fill="none" stroke="#5e6168" stroke-width="2"/>
<path d="M2538 778L2543 783" fill="none" stroke="#5e6168" stroke-width="3" />
<path d="M2521.5 792.25h7l-3.5 3.5z" fill="#5e6168"/>
<path d="M2518.5 818.5Q2507 820.5 2507 824Q2507 828 2524 829Q2541 828 2541 824Q2541 820 2530 818.5" fill="none" stroke="#5e6168" stroke-width="1.7"/>
<path d="M2511.5 829.5L2516.5 825V834Z" fill="#5e6168"/>
<path d="M2524 804.5L2530 811H2527.5V837H2520.5V811H2518Z" fill="none" stroke="#5e6168" stroke-width="1.6" stroke-linejoin="round"/>
<path d="M2521.5 848.25h7l-3.5 3.5z" fill="#5e6168"/>
<rect x="2508" y="868" width="8.5" height="8.5" fill="none" stroke="#5e6168" stroke-width="1.6" rx="1"/>
<rect x="2520" y="868" width="8.5" height="8.5" fill="none" stroke="#5e6168" stroke-width="1.6" rx="1"/>
<rect x="2532" y="868" width="8.5" height="8.5" fill="none" stroke="#5e6168" stroke-width="1.6" rx="1"/>
<rect x="2507.5" y="881" width="23" height="17" fill="none" stroke="#5e6168" stroke-width="1.6"/>
<path d="M2515 884V895L2524 889.5Z" fill="#5e6168"/>
<circle cx="2538.5" cy="920.5" r="3.6" fill="none" stroke="#5e6168" stroke-width="1.2"/>
</svg></body></html>
